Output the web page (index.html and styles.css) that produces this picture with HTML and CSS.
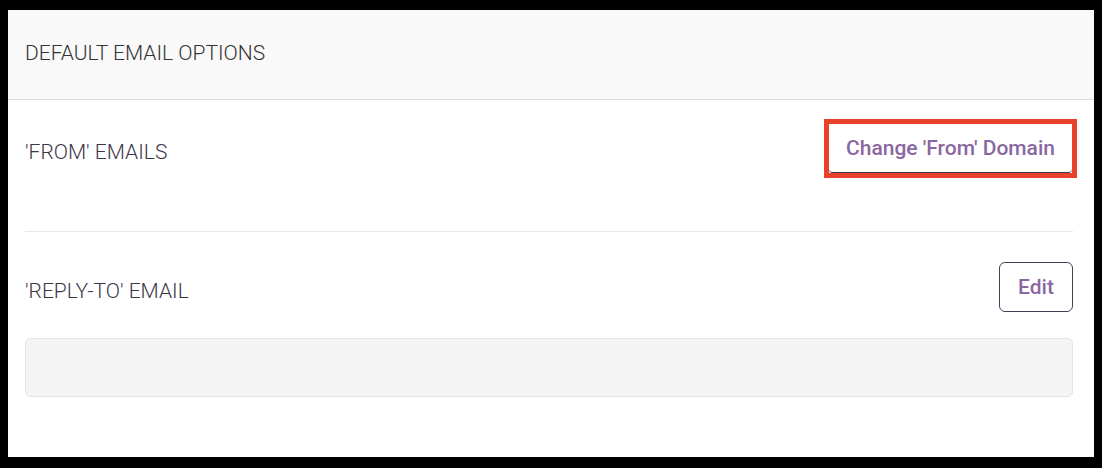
FILE: index.html
```html
<!DOCTYPE html>
<html lang="en">
<head>
    <meta charset="UTF-8">
    <meta name="viewport" content="width=device-width, initial-scale=1.0">
    <title>Default Email Options</title>
    <link rel="stylesheet" href="styles.css">
</head>
<body>
    <div class="panel">
        <div class="panel-head">DEFAULT EMAIL OPTIONS</div>

        <div class="panel-body">
            <div class="row row-from">
                <span class="label">'FROM' EMAILS</span>
                <!-- highlight box round the button -->
                <span class="highlight">
                    <button class="btn btn-domain">Change 'From' Domain</button>
                </span>
            </div>

            <div class="row row-reply">
                <span class="label">'REPLY-TO' EMAIL</span>
                <button class="btn btn-edit">Edit</button>
            </div>

            <div class="reply-box"></div>
        </div>
    </div>
</body>
</html>
```

FILE: styles.css
```css
body {
    margin: 0;
    background-color: #000;
    font-family: Roboto, "Liberation Sans", sans-serif;
    color: #3d3548;
}
.panel {
    background-color: #fff;
    margin: 10px 8px 0 8px;
    height: 447px;
}
.panel-head {
    background-color: #f9f9f9;
    border-bottom: 1px solid #dcdcdc;
    height: 86px;
    padding-left: 17px;
    padding-bottom: 3px;
    display: flex;
    align-items: center;
    font-size: 21px;
    font-weight: 300;
    color: #333;
}
.panel-body {
    padding: 0 21px 0 17px;
}
.row {
    display: flex;
    align-items: center;
    justify-content: space-between;
}
.label {
    font-size: 21px;
    font-weight: 300;
}
.row-from {
    padding-top: 19px;
    padding-bottom: 53px;
    border-bottom: 1px solid #e8e8e8;
}
.row-from .label {
    margin-top: 6px;
}
.row-reply {
    padding-top: 30px;
}
.row-reply .label {
    margin-top: 8px;
}
.highlight {
    display: block;
    border: 5px solid #e8432a;
    margin-right: -4px;
}
.btn {
    font-family: Roboto, "Liberation Sans", sans-serif;
    font-size: 21px;
    font-weight: 500;
    color: #8a67a0;
    background-color: #fff;
    cursor: pointer;
}
.btn-domain {
    display: block;
    width: 243px;
    height: 49px;
    border: none;
    border-bottom: 1px solid #3d3450;
    border-radius: 0 0 4px 4px;
    padding: 0;
}
.btn-edit {
    width: 74px;
    height: 50px;
    border: 1px solid #4a3d58;
    border-radius: 6px;
}
.reply-box {
    margin-top: 26px;
    height: 57px;
    background-color: #f4f4f4;
    border: 1px solid #e4e4e4;
    border-radius: 5px;
}
```
